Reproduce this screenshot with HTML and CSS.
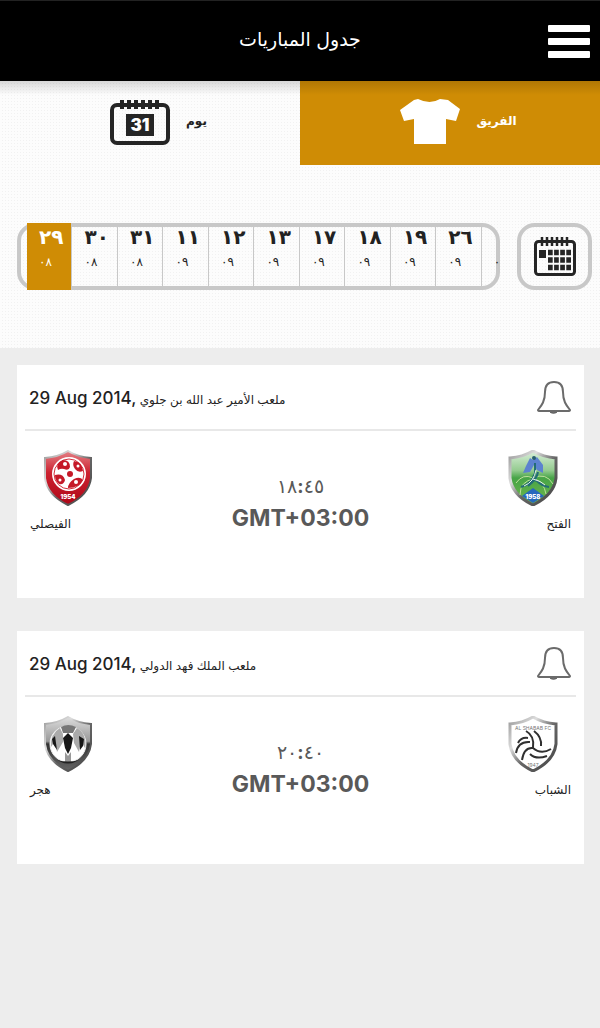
FILE: index.html
```html
<!DOCTYPE html>
<html lang="ar">
<head>
  <meta charset="UTF-8" />
  <meta name="viewport" content="width=device-width, initial-scale=1.0"/>
  <title>جدول المباريات</title>
  <link rel="stylesheet" href="styles.css">
</head>
<body>
  <header class="topbar">
    <h1>جدول المباريات</h1>
    <button class="menu-button" aria-label="القائمة"><span></span><span></span><span></span></button>
  </header>

  <div class="filters">
    <div class="tabs">
      <button class="tab">
        <svg width="60" height="46" viewBox="0 0 60 46">
          <rect x="2" y="6" width="56" height="38" rx="5" fill="none" stroke="#252525" stroke-width="4"/>
          <path d="M12 1v9M19 1v9M26 1v9M33 1v9M40 1v9M47 1v9" stroke="#252525" stroke-width="4"/>
          <rect x="16" y="15" width="28" height="22" fill="#252525"/>
          <text x="30" y="32" class="icon-day">31</text>
        </svg>
        <span>يوم</span>
      </button>
      <button class="tab active">
        <svg width="60" height="48" viewBox="0 0 60 48">
          <path d="M18 1Q30 7 40 1L48 2L60 11L56 23L46 21V46H14V21L4 23L0 12L14 2Z" fill="#fff"/>
        </svg>
        <span>الفريق</span>
      </button>
    </div>

    <div class="date-row">
      <div class="dates">
        <button class="date active"><b>٢٩</b><small>٠٨</small></button>
        <button class="date"><b>٣٠</b><small>٠٨</small></button>
        <button class="date"><b>٣١</b><small>٠٨</small></button>
        <button class="date"><b>١١</b><small>٠٩</small></button>
        <button class="date"><b>١٢</b><small>٠٩</small></button>
        <button class="date"><b>١٣</b><small>٠٩</small></button>
        <button class="date"><b>١٧</b><small>٠٩</small></button>
        <button class="date"><b>١٨</b><small>٠٩</small></button>
        <button class="date"><b>١٩</b><small>٠٩</small></button>
        <button class="date"><b>٢٦</b><small>٠٩</small></button>
        <button class="date last" aria-label="التالي"><b></b><small>٠</small></button>
      </div>
      <button class="calendar-button" aria-label="التقويم">
        <svg width="42" height="40" viewBox="0 0 42 40">
          <rect x="1.5" y="4.5" width="39" height="33" rx="3" fill="none" stroke="#252525" stroke-width="3"/>
          <path d="M8 0v9M13 0v9M18 0v9M23 0v9M28 0v9M33 0v9" stroke="#252525" stroke-width="2.5"/>
          <path d="M5 13h7v8H5z" fill="#252525"/>
          <path d="M14 15.500h23M14 23h23M14 30.500h23" stroke="#252525" stroke-width="5.500" stroke-dasharray="4.700 1.400"/>
        </svg>
      </button>
    </div>
  </div>

  <main class="matches">
    <article class="match">
      <div class="match-head">
        <p><b>29 Aug 2014,</b> <span dir="rtl">ملعب الأمير عبد الله بن جلوي</span></p>
        <button class="bell" aria-label="تنبيه">
          <svg width="36" height="36" viewBox="0 0 36 36">
            <path d="M13 31a5 4 0 0 0 9 0z" fill="#777" stroke="#555"/>
            <path d="M2 30C6 25 9 21 9 12Q9 2 18 2T27 12C27 21 30 25 34 30Q34 31 32 31H4Q2 31 2 30Z" fill="#fff" stroke="#6b6b6b" stroke-width="2"/>
          </svg>
        </button>
      </div>
      <div class="match-body">
        <div class="team">
          <svg width="50" height="56" viewBox="0 0 50 56">
            <defs>
              <linearGradient id="metal" x2="1" y2="1">
                <stop offset="0" stop-color="#999"/><stop offset=".3" stop-color="#ddd"/>
                <stop offset=".55" stop-color="#666"/><stop offset="1" stop-color="#444"/>
              </linearGradient>
              <linearGradient id="red" x2="0" y2="1">
                <stop offset="0" stop-color="#e48186"/><stop offset=".4" stop-color="#cc2230"/><stop offset="1" stop-color="#ae0717"/>
              </linearGradient>
            </defs>
            <path d="M25 1Q35 7 48 8V28Q46 45 25 55Q4 45 2 28V8Q15 7 25 1Z" fill="url(#red)" stroke="url(#metal)" stroke-width="2"/>
            <circle cx="26" cy="24" r="17" fill="#fff"/>
            <circle cx="26" cy="24" r="15" fill="none" stroke="#d4303c"/>
            <g fill="#c51928">
              <path d="M15 20Q12 13 20 10Q27 10 27 17Q26 21 21 19Q18 18 15 20Z"/>
              <path d="M31 11Q39 12 40 21Q35 23 32 19Q29 15 31 11Z"/>
              <path d="M12 25Q20 23 22 30Q21 35 16 34Q12 31 12 25Z"/>
              <path d="M25 38Q25 33 31 29Q37 26 40 30Q36 38 25 38Z"/>
              <circle cx="27" cy="24" r="3"/>
            </g>
            <g fill="#fff"><circle cx="22" cy="14" r="2"/><circle cx="35" cy="16" r="1.500"/><circle cx="17" cy="30" r="1.500"/><circle cx="33" cy="32" r="2"/></g>
            <text x="25" y="49" class="crest-year white">1954</text>
          </svg>
          <span>الفيصلي</span>
        </div>
        <div class="kickoff">
          <time class="hour">١٨<b>:</b>٤٥</time>
          <strong>GMT+03:00</strong>
        </div>
        <div class="team away">
          <svg width="50" height="56" viewBox="0 0 50 56">
            <defs>
              <linearGradient id="green" x2="0" y2="1">
                <stop offset="0" stop-color="#d9efda"/><stop offset=".36" stop-color="#94cb8f"/>
                <stop offset=".5" stop-color="#47a447"/><stop offset="1" stop-color="#72b84b"/>
              </linearGradient>
            </defs>
            <path d="M25 1Q35 7 48 8V28Q46 45 25 55Q4 45 2 28V8Q15 7 25 1Z" fill="url(#green)" stroke="url(#metal)" stroke-width="3"/>
            <path d="M18 16L22 8L25 10L29 7L35 15V23L29 20L26 15L22 22L15 23Z" fill="#5c82cf"/>
            <path d="M8 33Q15 23 25 28Q38 22 45 34M12 45Q12 31 26 29M38 44Q36 32 25 28" fill="none" stroke="#bedf9b"/>
            <path d="M13 37Q24 34 27 23L27 13M26 25Q23 30 29 31Q34 36 41 37M20 36Q29 29 30 22" fill="none" stroke="#236c76" stroke-width="2"/>
            <path d="M16 36Q26 32 28 20M25 29Q33 31 37 35" fill="none" stroke="#e8f5e9"/>
            <circle cx="26" cy="8" r="2" fill="#285d70"/>
            <path d="M14 46L25 38L36 46L25 53Z" fill="#2668bd"/>
            <text x="25" y="49" class="crest-year white">1958</text>
          </svg>
          <span>الفتح</span>
        </div>
      </div>
    </article>

    <article class="match">
      <div class="match-head">
        <p><b>29 Aug 2014,</b> <span dir="rtl">ملعب الملك فهد الدولي</span></p>
        <button class="bell" aria-label="تنبيه">
          <svg width="36" height="36" viewBox="0 0 36 36">
            <path d="M13 31a5 4 0 0 0 9 0z" fill="#777" stroke="#555"/>
            <path d="M2 30C6 25 9 21 9 12Q9 2 18 2T27 12C27 21 30 25 34 30Q34 31 32 31H4Q2 31 2 30Z" fill="#fff" stroke="#6b6b6b" stroke-width="2"/>
          </svg>
        </button>
      </div>
      <div class="match-body">
        <div class="team">
          <svg width="50" height="56" viewBox="0 0 50 56">
            <defs>
              <linearGradient id="dark" x2="0" y2="1">
                <stop offset="0" stop-color="#ddd"/><stop offset=".45" stop-color="#999"/><stop offset=".5" stop-color="#333"/><stop offset="1" stop-color="#666"/>
              </linearGradient>
            </defs>
            <path d="M25 1Q35 7 48 8V28Q46 45 25 55Q4 45 2 28V8Q15 7 25 1Z" fill="url(#dark)" stroke="url(#metal)" stroke-width="2"/>
            <circle cx="25" cy="28" r="18" fill="#fff" stroke="#eee"/>
            <path d="M18 11Q25 7 33 11L30 17H20Z" fill="#777"/>
            <path d="M17 12Q7 18 8 31L12 25L14 36L20 26L20 18ZM34 12Q44 18 42 32L38 25L36 36L31 27L30 18Z" fill="#aaa"/>
            <path d="M9 23L12 20L14 34L10 28ZM36 20L41 23L40 30L37 34ZM25 17L30 22L28 32L25 38L22 32L20 22Z" fill="#171717"/>
            <path d="M22 36L25 40L28 36V46H22Z" fill="#999"/>
            <path d="M14 44Q25 47 36 44Q25 51 14 44Z" fill="#222"/>
          </svg>
          <span>هجر</span>
        </div>
        <div class="kickoff">
          <time class="hour">٢٠<b>:</b>٤٠</time>
          <strong>GMT+03:00</strong>
        </div>
        <div class="team away">
          <svg width="50" height="56" viewBox="0 0 50 56">
            <path d="M25 1Q35 7 48 8V28Q46 45 25 55Q4 45 2 28V8Q15 7 25 1Z" fill="#fff" stroke="url(#metal)" stroke-width="3"/>
            <text x="25" y="14" class="crest-name">AL SHABAB FC</text>
            <path d="M18 15Q27 20 25 32Q33 39 43 33M26 15Q34 21 33 30M25 32Q16 31 14 44M22 26Q10 25 8 37M22 38Q28 44 39 40M20 22Q13 21 10 27" fill="none" stroke="#303030" stroke-width="2"/>
            <text x="25" y="51" class="crest-name">1947</text>
          </svg>
          <span>الشباب</span>
        </div>
      </div>
    </article>
  </main>
</body>
</html>
```
FILE: styles.css
```css
* {
  box-sizing: border-box;
}

body {
  margin: 0;
  font-family: Inter, "DejaVu Sans", sans-serif;
  color: #222;
  background-color: #ededed;
}

button {
  margin: 0;
  padding: 0;
  border: none;
  background: none;
  color: inherit;
  font-family: inherit;
}

svg {
  display: block;
  flex-shrink: 0;
}

.topbar {
  display: grid;
  grid-template-columns: 1fr auto 1fr;
  align-items: center;
  height: 81px;
  padding: 0 10px;
  border-top: 1px solid #222;
  background-color: #000;
  color: #fff;
}

.topbar h1 {
  grid-column: 2;
  margin: 0;
  padding-bottom: 4px;
  font-size: 19px;
  font-weight: normal;
}

.menu-button {
  display: flex;
  flex-direction: column;
  justify-self: end;
  gap: 6px;
}

.menu-button span {
  width: 42px;
  height: 7px;
  border-radius: 1px;
  background-color: #fff;
}

.filters {
  height: 267px;
  background-color: #fcfcfc;
  background-image:
    linear-gradient(#fcfcfc 2px, transparent 2px),
    linear-gradient(90deg, #fcfcfc 2px, #f1f1f1 2px);
  background-size: 3px 3px;
}

.tabs {
  display: flex;
  height: 84px;
  background-image: linear-gradient(rgba(0, 0, 0, 0.15), transparent 14px);
}

.tab {
  display: flex;
  flex: 1;
  align-items: center;
  justify-content: center;
  gap: 16px;
  padding-left: 17px;
  padding-bottom: 2px;
  font-size: 12px;
  font-weight: bold;
}

.tab span {
  padding-bottom: 4px;
}

.tab.active {
  color: #fff;
  background: linear-gradient(rgba(0, 0, 0, 0.15), transparent 14px) #cf8c05;
}

.date-row {
  display: flex;
  gap: 17px;
  padding: 58px 8px 0 17px;
}

.dates {
  display: flex;
  flex: 1;
  min-width: 0;
  height: 67px;
  padding-left: 6px;
  border: 4px solid #c8c8c8;
  border-radius: 18px;
}

.date {
  display: flex;
  flex: 0 0 auto;
  width: 9.7%;
  flex-direction: column;
  align-items: flex-start;
  justify-content: flex-start;
  border-right: 1px solid #c8c8c8;
  padding-left: 12px;
}

.date b {
  height: 24px;
  font-size: 20px;
  line-height: 20px;
}

.date small {
  font-size: 12px;
  line-height: 22px;
}

.date.active {
  margin: -4px 0;
  padding-top: 4px;
  color: #fff;
  background-color: #cf8c05;
}

.date.last {
  flex: 1 1 0;
  min-width: 0;
  border-right: none;
}

.calendar-button {
  display: flex;
  align-items: center;
  justify-content: center;
  width: 75px;
  height: 67px;
  border: 4px solid #c8c8c8;
  border-radius: 18px;
}

.matches {
  display: flex;
  flex-direction: column;
  gap: 33px;
  padding: 17px 16px 17px 17px;
}

.match {
  min-height: 233px;
  padding: 0 8px;
  background-color: #fff;
}

.match-head {
  display: flex;
  align-items: center;
  justify-content: space-between;
  height: 66px;
  padding: 2px 4px 0;
  border-bottom: 2px solid #e8e8e8;
}

.match-head p {
  margin: 0;
  font-size: 12px;
}

.match-head b {
  font-size: 17px;
  font-weight: 500;
}

.match-body {
  display: grid;
  grid-template-columns: 1fr auto 1fr;
  padding: 19px 5px;
}

.team {
  display: flex;
  flex-direction: column;
  align-items: flex-start;
  gap: 10px;
  font-size: 12px;
}

.team svg {
  margin: 0 13px;
}

.away {
  align-items: flex-end;
}

.kickoff {
  display: flex;
  flex-direction: column;
  align-items: center;
  padding-top: 22px;
  color: #595959;
}

.hour {
  font-size: 19px;
  line-height: 30px;
}

.kickoff strong {
  font-size: 23px;
  line-height: 32px;
}

.icon-day {
  fill: #fff;
  font-size: 17px;
  font-weight: 900;
  text-anchor: middle;
}

.crest-year {
  font-size: 6px;
  font-weight: 900;
  text-anchor: middle;
}

.white {
  fill: #fff;
}

.crest-name {
  fill: #777;
  font-size: 5px;
  text-anchor: middle;
}
```
